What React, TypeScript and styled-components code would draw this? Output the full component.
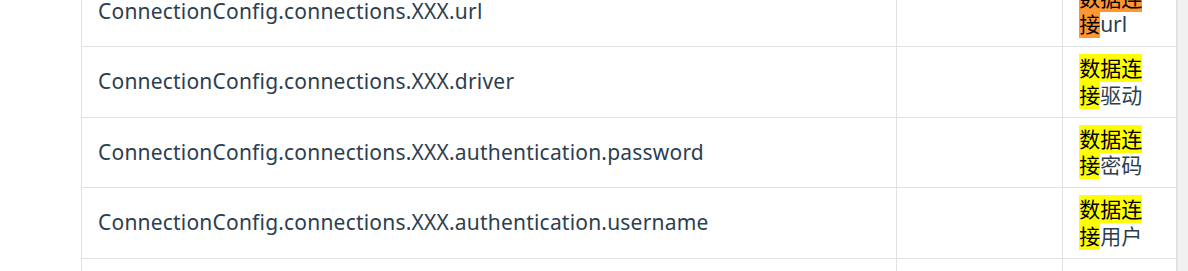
import React from 'react';
import styled, { createGlobalStyle } from 'styled-components';

const GlobalStyle = createGlobalStyle`
  html, body {
    margin: 0;
    padding: 0;
    background: #fff;
    overflow: hidden;
  }
`;

const Page = styled.div`
  display: flex;
  height: 271px;
  overflow: hidden;
`;

const Content = styled.div`
  flex: 1;
  padding-left: 81px;
`;

const Scrollbar = styled.div`
  width: 11px;
  background: #f1f1f1;
  border-left: 1px solid #e3e3e3;
`;

const Table = styled.table`
  border-collapse: collapse;
  width: 1096px;
  margin-top: -24.5px;
  font-family: 'Noto Sans', 'Noto Sans CJK SC', sans-serif;
  font-size: 21px;
  line-height: 26.75px;
  color: #2c3e50;
`;

const Row = styled.tr``;

const Cell = styled.td<{ $w: number }>`
  width: ${p => p.$w}px;
  border: 1px solid #dfe2e5;
  padding: 8px 16px;
  vertical-align: middle;
  box-sizing: border-box;
`;

const KeyCell = styled(Cell)`
  letter-spacing: 0.2px;
`;

const Mark = styled.mark<{ $current?: boolean }>`
  background: ${p => (p.$current ? '#ff9632' : '#ffff00')};
  color: #000;
`;

const rows = [
  { key: 'url', desc: 'url' },
  { key: 'driver', desc: '驱动' },
  { key: 'authentication.password', desc: '密码' },
  { key: 'authentication.username', desc: '用户' },
];

const App: React.FC = () => {
  return (
    <Page>
      <GlobalStyle />
      <Content>
        <Table>
          <tbody>
            {rows.map((r, i) => (
              <Row key={r.key}>
                <KeyCell $w={815}>ConnectionConfig.connections.XXX.{r.key}</KeyCell>
                <Cell $w={167}></Cell>
                <Cell $w={114}>
                  <Mark $current={i === 0}>数据连接</Mark>
                  {r.desc}
                </Cell>
              </Row>
            ))}
            <Row>
              <KeyCell $w={815}>&nbsp;</KeyCell>
              <Cell $w={167}></Cell>
              <Cell $w={114}></Cell>
            </Row>
          </tbody>
        </Table>
      </Content>
      <Scrollbar />
    </Page>
  );
};

export default App;
